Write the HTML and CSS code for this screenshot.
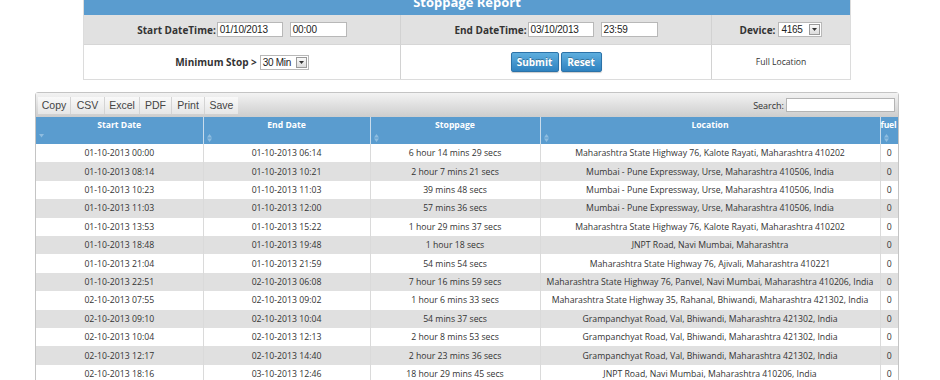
FILE: index.html
```html
<!DOCTYPE html>
<html>
<head>
<meta charset="utf-8">
<link rel="stylesheet" href="styles.css">
</head>
<body>
<div class="panel">
  <div class="panel-title">Stoppage Report</div>
  <div class="filters">
    <div class="cell gray"><span class="lbl">Start DateTime:</span><span class="inp w66">01/10/2013</span><span class="inp w57 ml">00:00</span></div>
    <div class="cell gray"><span class="lbl">End DateTime:</span><span class="inp w66">03/10/2013</span><span class="inp w57 ml">23:59</span></div>
    <div class="cell gray last"><span class="lbl">Device:</span><span class="sel"><span class="sel-txt w30">4165</span><span class="sel-btn"><svg width="5" height="3" viewBox="0 0 5 3"><path d="M0 0h5L2.5 3z" fill="#333"/></svg></span></span></div>
    <div class="cell white"><span class="lbl">Minimum Stop &gt;</span><span class="sel"><span class="sel-txt w34">30 Min</span><span class="sel-btn"><svg width="5" height="3" viewBox="0 0 5 3"><path d="M0 0h5L2.5 3z" fill="#333"/></svg></span></span></div>
    <div class="cell white"><span class="btn b-submit">Submit</span><span class="btn b-reset">Reset</span></div>
    <div class="cell white last"><span class="full">Full Location</span></div>
  </div>
</div>

<div class="dt">
  <div class="toolbar">
    <div class="tools">
      <span class="tool t-copy">Copy</span><span class="tool t-csv">CSV</span><span class="tool t-excel">Excel</span><span class="tool t-pdf">PDF</span><span class="tool t-print">Print</span><span class="tool t-save">Save</span>
    </div>
    <div class="search"><span>Search:</span><span class="search-box"></span></div>
  </div>
  <table class="grid">
    <colgroup><col class="c1"><col class="c2"><col class="c3"><col class="c4"><col class="c5"></colgroup>
    <thead>
      <tr>
        <th><div class="th-t">Start Date</div><div class="sort"><svg width="5" height="4" viewBox="0 0 5 4"><path d="M0 0h5L2.5 3.5z" fill="#8fbde0"/></svg></div></th>
        <th><div class="th-t">End Date</div><div class="sort"><svg width="5" height="8" viewBox="0 0 5 8"><path d="M0 3.4L2.5 0 5 3.4z M0 4.6h5L2.5 8z" fill="#8fbde0"/></svg></div></th>
        <th><div class="th-t">Stoppage</div><div class="sort"><svg width="5" height="8" viewBox="0 0 5 8"><path d="M0 3.4L2.5 0 5 3.4z M0 4.6h5L2.5 8z" fill="#8fbde0"/></svg></div></th>
        <th><div class="th-t">Location</div><div class="sort"><svg width="5" height="8" viewBox="0 0 5 8"><path d="M0 3.4L2.5 0 5 3.4z M0 4.6h5L2.5 8z" fill="#8fbde0"/></svg></div></th>
        <th class="fuel"><div class="th-t">fuel</div><div class="sort"><svg width="5" height="8" viewBox="0 0 5 8"><path d="M0 3.4L2.5 0 5 3.4z M0 4.6h5L2.5 8z" fill="#8fbde0"/></svg></div></th>
      </tr>
    </thead>
    <tbody>
      <tr><td>01-10-2013 00:00</td><td>01-10-2013 06:14</td><td>6 hour 14 mins 29 secs</td><td>Maharashtra State Highway 76, Kalote Rayati, Maharashtra 410202</td><td>0</td></tr>
      <tr><td>01-10-2013 08:14</td><td>01-10-2013 10:21</td><td>2 hour 7 mins 21 secs</td><td>Mumbai - Pune Expressway, Urse, Maharashtra 410506, India</td><td>0</td></tr>
      <tr><td>01-10-2013 10:23</td><td>01-10-2013 11:03</td><td>39 mins 48 secs</td><td>Mumbai - Pune Expressway, Urse, Maharashtra 410506, India</td><td>0</td></tr>
      <tr><td>01-10-2013 11:03</td><td>01-10-2013 12:00</td><td>57 mins 36 secs</td><td>Mumbai - Pune Expressway, Urse, Maharashtra 410506, India</td><td>0</td></tr>
      <tr><td>01-10-2013 13:53</td><td>01-10-2013 15:22</td><td>1 hour 29 mins 37 secs</td><td>Maharashtra State Highway 76, Kalote Rayati, Maharashtra 410202</td><td>0</td></tr>
      <tr><td>01-10-2013 18:48</td><td>01-10-2013 19:48</td><td>1 hour 18 secs</td><td>JNPT Road, Navi Mumbai, Maharashtra</td><td>0</td></tr>
      <tr><td>01-10-2013 21:04</td><td>01-10-2013 21:59</td><td>54 mins 54 secs</td><td>Maharashtra State Highway 76, Ajivali, Maharashtra 410221</td><td>0</td></tr>
      <tr><td>01-10-2013 22:51</td><td>02-10-2013 06:08</td><td>7 hour 16 mins 59 secs</td><td>Maharashtra State Highway 76, Panvel, Navi Mumbai, Maharashtra 410206, India</td><td>0</td></tr>
      <tr><td>02-10-2013 07:55</td><td>02-10-2013 09:02</td><td>1 hour 6 mins 33 secs</td><td>Maharashtra State Highway 35, Rahanal, Bhiwandi, Maharashtra 421302, India</td><td>0</td></tr>
      <tr><td>02-10-2013 09:10</td><td>02-10-2013 10:04</td><td>54 mins 37 secs</td><td>Grampanchyat Road, Val, Bhiwandi, Maharashtra 421302, India</td><td>0</td></tr>
      <tr><td>02-10-2013 10:04</td><td>02-10-2013 12:13</td><td>2 hour 8 mins 53 secs</td><td>Grampanchyat Road, Val, Bhiwandi, Maharashtra 421302, India</td><td>0</td></tr>
      <tr><td>02-10-2013 12:17</td><td>02-10-2013 14:40</td><td>2 hour 23 mins 36 secs</td><td>Grampanchyat Road, Val, Bhiwandi, Maharashtra 421302, India</td><td>0</td></tr>
      <tr><td>02-10-2013 18:16</td><td>03-10-2013 12:46</td><td>18 hour 29 mins 45 secs</td><td>JNPT Road, Navi Mumbai, Maharashtra 410206, India</td><td>0</td></tr>
    </tbody>
  </table>
</div>
</body>
</html>
```
FILE: styles.css
```css
* { box-sizing: border-box; }
html, body { height: 380px; overflow: hidden; }
body {
  margin: 0;
  background: #fff;
  font-family: "Open Sans", "DejaVu Sans", sans-serif;
  color: #333;
}

/* ---------- filter panel ---------- */
.panel {
  margin: -11px 0 0 83px;
  width: 768px;
  border: 1px solid #dcdcdc;
  border-top: none;
}
.panel-title {
  height: 26px;
  background: #5a9ccf;
  color: #fff;
  font-weight: bold;
  font-size: 13px;
  line-height: 26px;
  text-align: center;
}
.filters {
  display: grid;
  grid-template-columns: 317px 311px 1fr;
  grid-template-rows: 29px 35px;
}
.cell {
  display: flex;
  align-items: center;
  justify-content: center;
  border-right: 1px solid #d2d2d2;
}
.cell.last { border-right: none; }
.cell.gray { background: #e1e1e1; }
.cell.white { background: #fff; border-top: 1px solid #d6d6d6; }
.lbl {
  font-size: 10px;
  font-weight: bold;
  color: #333;
  margin-right: 1px;
}
.inp {
  display: inline-block;
  height: 15px;
  border: 1px solid #b8b8b8;
  background: #fff;
  font-family: "Liberation Sans", Arial, sans-serif;
  font-size: 10px;
  line-height: 13px;
  padding-left: 2px;
  color: #222;
  letter-spacing: -0.2px;
}
.w66 { width: 66px; }
.w57 { width: 57px; }
.ml { margin-left: 7px; }
.sel {
  display: inline-flex;
  height: 15px;
  margin-left: 2px;
  border: 1px solid #b8b8b8;
  background: #fff;
}
.sel-txt {
  font-family: "Liberation Sans", Arial, sans-serif;
  font-size: 10px;
  line-height: 13px;
  padding-left: 2px;
  color: #222;
  letter-spacing: -0.3px;
  white-space: nowrap;
}
.w30 { width: 29px; }
.w34 { width: 34px; }
.sel-btn {
  width: 11px;
  height: 11px;
  margin: 1px;
  border: 1px solid #9a9a9a;
  background: linear-gradient(#fafafa, #dcdcdc);
  display: flex;
  align-items: center;
  justify-content: center;
}
.btn {
  display: inline-block;
  height: 20px;
  margin: 0 1px;
  border: 1px solid #2b72a8;
  border-radius: 2px;
  background: linear-gradient(#5eaede, #2f82c0);
  color: #fff;
  font-size: 10px;
  font-weight: bold;
  line-height: 18px;
  text-align: center;
  text-shadow: 0 -1px 0 rgba(0,0,0,0.3);
  box-shadow: 0 1px 1px rgba(0,0,0,0.2);
}
.b-submit { width: 48px; }
.b-reset { width: 41px; }
.full { font-size: 8.6px; color: #333; }

/* ---------- data table ---------- */
.dt {
  margin: 12px 0 0 35px;
  width: 864px;
  border: 1px solid #c4c4c4;
  border-radius: 3px 3px 0 0;
}
.toolbar {
  height: 24px;
  display: flex;
  align-items: center;
  justify-content: space-between;
  padding: 0 3px 0 2px;
  background: linear-gradient(#f3f3f3, #cdcdcd);
}
.tools { display: flex; }
.tool {
  height: 17px;
  background: linear-gradient(#f9f9f9, #e6e6e6);
  border-right: 1px solid #d4d4d4;
  font-family: "Liberation Sans", Arial, sans-serif;
  font-size: 10.5px;
  line-height: 17px;
  color: #444;
  text-align: center;
}
.t-copy { width: 33px; }
.t-csv { width: 34px; }
.t-excel { width: 35px; }
.t-pdf { width: 32px; }
.t-print { width: 33px; }
.t-save { width: 33px; border-right: none; }
.search {
  display: flex;
  align-items: center;
  font-size: 9px;
  color: #333;
}
.search-box {
  width: 109px;
  height: 14px;
  margin-left: 2px;
  border: 1px solid #b4b4b4;
  background: #fff;
}
.grid {
  width: 862px;
  border-collapse: collapse;
  table-layout: fixed;
}
.c1 { width: 167px; }
.c2 { width: 167px; }
.c3 { width: 170px; }
.c4 { width: 340px; }
.c5 { width: 18px; }
.grid th {
  height: 27px;
  padding: 2px 0 0;
  background: #5a9ccf;
  color: #fff;
  font-size: 8.6px;
  font-weight: bold;
  vertical-align: top;
  border-right: 1px solid #c9dcec;
  overflow: visible;
  white-space: nowrap;
}
.grid th:last-child { border-right: none; }
.th-t { text-align: center; line-height: 12px; }
.fuel .th-t { text-align: left; padding-left: 0; letter-spacing: -0.2px; }
.sort { text-align: left; padding: 3px 0 0 3px; height: 12px; line-height: 0; }
.grid td {
  height: 18.42px;
  padding: 0;
  font-size: 8.7px;
  color: #333;
  text-align: center;
  white-space: nowrap;
  border-right: 1px solid #dadada;
}
.grid td:last-child { border-right: none; }
.grid tbody tr:nth-child(even) td { background: #e0e0e0; }
.grid tbody tr:nth-child(odd) td { background: #fff; }
```
